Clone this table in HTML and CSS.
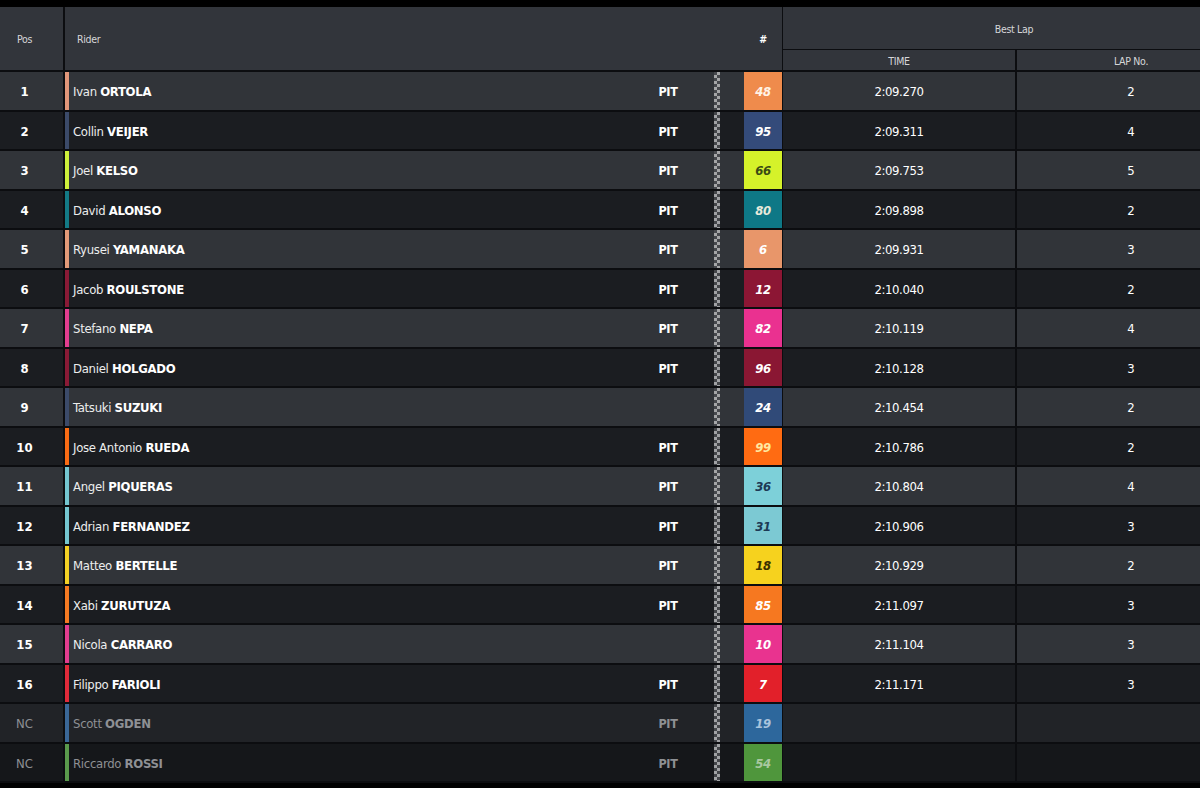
FILE: index.html
```html
<!DOCTYPE html>
<html>
<head>
<meta charset="utf-8">
<link rel="stylesheet" href="styles.css">
</head>
<body>
<div class="board">
  <div class="head">
    <div class="h-pos">Pos</div>
    <div class="h-rider"><span class="h-rider-label">Rider</span><span class="h-hash">#</span></div>
    <div class="h-best">
      <div class="h-best-title">Best Lap</div>
      <div class="h-sub">
        <div class="h-time">TIME</div>
        <div class="h-lap">LAP No.</div>
      </div>
    </div>
  </div>

  <div class="row odd">
    <div class="pos">1</div>
    <div class="rider"><span class="stripe s-orange"></span><span class="name">Ivan <b>ORTOLA</b></span><span class="pit">PIT</span><span class="chk"></span><span class="num n48">48</span></div>
    <div class="time">2:09.270</div><div class="lap">2</div>
  </div>
  <div class="row even">
    <div class="pos">2</div>
    <div class="rider"><span class="stripe s-navy"></span><span class="name">Collin <b>VEIJER</b></span><span class="pit">PIT</span><span class="chk"></span><span class="num n95">95</span></div>
    <div class="time">2:09.311</div><div class="lap">4</div>
  </div>
  <div class="row odd">
    <div class="pos">3</div>
    <div class="rider"><span class="stripe s-lime"></span><span class="name">Joel <b>KELSO</b></span><span class="pit">PIT</span><span class="chk"></span><span class="num n66">66</span></div>
    <div class="time">2:09.753</div><div class="lap">5</div>
  </div>
  <div class="row even">
    <div class="pos">4</div>
    <div class="rider"><span class="stripe s-teal"></span><span class="name">David <b>ALONSO</b></span><span class="pit">PIT</span><span class="chk"></span><span class="num n80">80</span></div>
    <div class="time">2:09.898</div><div class="lap">2</div>
  </div>
  <div class="row odd">
    <div class="pos">5</div>
    <div class="rider"><span class="stripe s-peach"></span><span class="name">Ryusei <b>YAMANAKA</b></span><span class="pit">PIT</span><span class="chk"></span><span class="num n6">6</span></div>
    <div class="time">2:09.931</div><div class="lap">3</div>
  </div>
  <div class="row even">
    <div class="pos">6</div>
    <div class="rider"><span class="stripe s-crimson"></span><span class="name">Jacob <b>ROULSTONE</b></span><span class="pit">PIT</span><span class="chk"></span><span class="num n12">12</span></div>
    <div class="time">2:10.040</div><div class="lap">2</div>
  </div>
  <div class="row odd">
    <div class="pos">7</div>
    <div class="rider"><span class="stripe s-pink"></span><span class="name">Stefano <b>NEPA</b></span><span class="pit">PIT</span><span class="chk"></span><span class="num n82">82</span></div>
    <div class="time">2:10.119</div><div class="lap">4</div>
  </div>
  <div class="row even">
    <div class="pos">8</div>
    <div class="rider"><span class="stripe s-crimson"></span><span class="name">Daniel <b>HOLGADO</b></span><span class="pit">PIT</span><span class="chk"></span><span class="num n96">96</span></div>
    <div class="time">2:10.128</div><div class="lap">3</div>
  </div>
  <div class="row odd">
    <div class="pos">9</div>
    <div class="rider"><span class="stripe s-navy"></span><span class="name">Tatsuki <b>SUZUKI</b></span><span class="pit"></span><span class="chk"></span><span class="num n24">24</span></div>
    <div class="time">2:10.454</div><div class="lap">2</div>
  </div>
  <div class="row even">
    <div class="pos">10</div>
    <div class="rider"><span class="stripe s-ktm"></span><span class="name">Jose Antonio <b>RUEDA</b></span><span class="pit">PIT</span><span class="chk"></span><span class="num n99">99</span></div>
    <div class="time">2:10.786</div><div class="lap">2</div>
  </div>
  <div class="row odd">
    <div class="pos">11</div>
    <div class="rider"><span class="stripe s-cyan"></span><span class="name">Angel <b>PIQUERAS</b></span><span class="pit">PIT</span><span class="chk"></span><span class="num n36">36</span></div>
    <div class="time">2:10.804</div><div class="lap">4</div>
  </div>
  <div class="row even">
    <div class="pos">12</div>
    <div class="rider"><span class="stripe s-cyan"></span><span class="name">Adrian <b>FERNANDEZ</b></span><span class="pit">PIT</span><span class="chk"></span><span class="num n31">31</span></div>
    <div class="time">2:10.906</div><div class="lap">3</div>
  </div>
  <div class="row odd">
    <div class="pos">13</div>
    <div class="rider"><span class="stripe s-yellow"></span><span class="name">Matteo <b>BERTELLE</b></span><span class="pit">PIT</span><span class="chk"></span><span class="num n18">18</span></div>
    <div class="time">2:10.929</div><div class="lap">2</div>
  </div>
  <div class="row even">
    <div class="pos">14</div>
    <div class="rider"><span class="stripe s-orange2"></span><span class="name">Xabi <b>ZURUTUZA</b></span><span class="pit">PIT</span><span class="chk"></span><span class="num n85">85</span></div>
    <div class="time">2:11.097</div><div class="lap">3</div>
  </div>
  <div class="row odd">
    <div class="pos">15</div>
    <div class="rider"><span class="stripe s-pink"></span><span class="name">Nicola <b>CARRARO</b></span><span class="pit"></span><span class="chk"></span><span class="num n10">10</span></div>
    <div class="time">2:11.104</div><div class="lap">3</div>
  </div>
  <div class="row even">
    <div class="pos">16</div>
    <div class="rider"><span class="stripe s-red"></span><span class="name">Filippo <b>FARIOLI</b></span><span class="pit">PIT</span><span class="chk"></span><span class="num n7">7</span></div>
    <div class="time">2:11.171</div><div class="lap">3</div>
  </div>
  <div class="row nc odd-nc">
    <div class="pos">NC</div>
    <div class="rider"><span class="stripe s-blue"></span><span class="name">Scott <b>OGDEN</b></span><span class="pit">PIT</span><span class="chk"></span><span class="num n19">19</span></div>
    <div class="time"></div><div class="lap"></div>
  </div>
  <div class="row nc even-nc">
    <div class="pos">NC</div>
    <div class="rider"><span class="stripe s-green"></span><span class="name">Riccardo <b>ROSSI</b></span><span class="pit">PIT</span><span class="chk"></span><span class="num n54">54</span></div>
    <div class="time"></div><div class="lap"></div>
  </div>
</div>
</body>
</html>
```

FILE: styles.css
```css
* { box-sizing: border-box; }

body {
  margin: 0;
  background: #000;
  overflow: hidden;
  font-family: "DejaVu Sans Condensed", "DejaVu Sans", sans-serif;
  font-stretch: condensed;
  color: #fff;
}

.board {
  margin-top: 7px;
  width: 1245px;
}

/* header */
.head {
  display: flex;
  height: 65px;
  background: #32353b;
  border-bottom: 2px solid #0c0d10;
  font-size: 10.5px;
  color: #d6d7d9;
  letter-spacing: -0.3px;
}
.h-pos {
  width: 65px;
  border-right: 2px solid #0c0d10;
  display: flex;
  align-items: center;
  justify-content: center;
  padding-right: 14px;
}
.h-rider {
  width: 718px;
  border-right: 1px solid #0c0d10;
  display: flex;
  align-items: center;
}
.h-rider-label {
  flex: 1;
  padding-left: 12px;
}
.h-hash {
  width: 38px;
  text-align: center;
  font-weight: bold;
  color: #fff;
}
.h-best {
  flex: 1;
  display: flex;
  flex-direction: column;
}
.h-best-title {
  height: 43px;
  border-bottom: 1px solid #0c0d10;
  display: flex;
  align-items: center;
  justify-content: center;
  padding-top: 2px;
}
.h-sub {
  flex: 1;
  display: flex;
}
.h-time {
  width: 234px;
  border-right: 2px solid #0c0d10;
  display: flex;
  align-items: center;
  justify-content: center;
  padding-top: 1px;
}
.h-lap {
  flex: 1;
  display: flex;
  align-items: center;
  justify-content: center;
  padding-top: 1px;
}

/* rows */
.row {
  display: flex;
  height: 39.5px;
  border-bottom: 2px solid #0c0d10;
  font-size: 13px;
}
.odd { background: #313439; }
.even { background: #1b1d21; }
.odd-nc { background: #212327; }
.even-nc { background: #15171a; }

.pos,
.name,
.pit,
.num,
.time,
.lap { padding-top: 2px; }

.pos {
  width: 65px;
  border-right: 2px solid #0c0d10;
  display: flex;
  align-items: center;
  justify-content: center;
  padding-right: 14px;
  font-weight: bold;
  font-size: 13px;
}
.rider {
  width: 718px;
  border-right: 1px solid #0c0d10;
  display: flex;
  align-items: stretch;
}
.stripe {
  width: 4px;
  flex: none;
}
.name {
  flex: 1;
  padding-left: 4px;
  display: flex;
  align-items: center;
  white-space: pre;
  color: #eceded;
  letter-spacing: -0.3px;
}
.name b {
  color: #fff;
  font-weight: bold;
}
.pit {
  width: 40px;
  flex: none;
  display: flex;
  align-items: center;
  justify-content: center;
  font-weight: bold;
  font-size: 12.5px;
  letter-spacing: -0.3px;
}
.chk {
  width: 6px;
  flex: none;
  margin-left: 26px;
  margin-right: 24px;
  background-image: conic-gradient(#b9babc 0 25%, #4a4c50 0 50%, #b9babc 0 75%, #4a4c50 0);
  background-size: 6px 6px;
  opacity: 0.85;
}
.num {
  width: 38px;
  flex: none;
  display: flex;
  align-items: center;
  justify-content: center;
  font-weight: bold;
  font-style: italic;
  font-size: 13px;
  letter-spacing: -0.3px;
}
.time {
  width: 234px;
  border-right: 2px solid #0c0d10;
  display: flex;
  align-items: center;
  justify-content: center;
  font-size: 13px;
  letter-spacing: -0.4px;
}
.lap {
  flex: 1;
  display: flex;
  align-items: center;
  justify-content: center;
  font-size: 13px;
}

.nc .pos,
.nc .name,
.nc .name b,
.nc .pit { color: #8e9094; }
.nc .pos { font-weight: normal; }

/* rider colours */
.s-orange { background: #e1967a; }
.s-navy { background: #3b4a69; }
.s-lime { background: #cdef3a; }
.s-teal { background: #137a86; }
.s-peach { background: #e39a78; }
.s-crimson { background: #8a1a36; }
.s-pink { background: #e23d8f; }
.s-ktm { background: #f96b14; }
.s-cyan { background: #74c6d0; }
.s-yellow { background: #f3d024; }
.s-orange2 { background: #f47a22; }
.s-red { background: #e02a3a; }
.s-blue { background: #3a6797; }
.s-green { background: #5a9a4c; }

.n48 { background: #ef8b4c; color: #fff3e6; }
.n95 { background: #344b7a; color: #fff; }
.n66 { background: #d5f22a; color: #3a4a14; }
.n80 { background: #0e7886; color: #e8eadb; }
.n6  { background: #e8966a; color: #fff; }
.n12 { background: #8c1634; color: #fff; }
.n82 { background: #ea3190; color: #fff; }
.n96 { background: #8a1733; color: #fff; }
.n24 { background: #304a78; color: #fff; }
.n99 { background: #ff6b12; color: #ffe8a0; }
.n36 { background: #7dd0d9; color: #1d3a55; }
.n31 { background: #7cc9d3; color: #1d3a55; }
.n18 { background: #f6d21e; color: #3a3000; }
.n85 { background: #f67820; color: #fff; }
.n10 { background: #e9338f; color: #fff; }
.n7  { background: #e2202a; color: #fff; }
.n19 { background: #2d679c; color: #a9c3dc; }
.n54 { background: #4f963c; color: #a9c8a0; }
```
